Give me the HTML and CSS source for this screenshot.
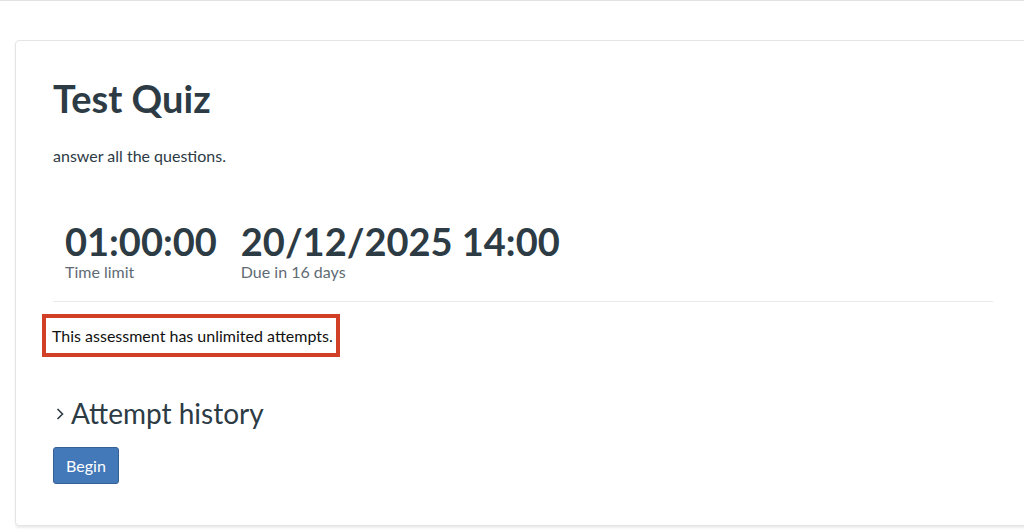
FILE: index.html
```html
<!DOCTYPE html>
<html>
<head>
<meta charset="utf-8">
<link rel="stylesheet" href="styles.css">
</head>
<body>
<div class="topbar"></div>
<main class="page">
  <section class="card">
    <h1 class="title">Test Quiz</h1>
    <p class="desc">answer all the questions.</p>
    <div class="stats">
      <div class="stat">
        <div class="stat-value">01:00:00</div>
        <div class="stat-label">Time limit</div>
      </div>
      <div class="stat">
        <div class="stat-value">20/12/2025 14:00</div>
        <div class="stat-label">Due in 16 days</div>
      </div>
    </div>
    <hr class="divider">
    <div class="attempts"><span>This assessment has unlimited attempts.</span></div>
    <div class="history">
      <svg class="chev" width="10" height="14" viewBox="0 0 10 14"><path d="M2.5 2 L7.5 7 L2.5 12" fill="none" stroke="#2d3b45" stroke-width="1.6"/></svg>
      <span>Attempt history</span>
    </div>
    <button class="begin">Begin</button>
  </section>
</main>
</body>
</html>
```
FILE: styles.css
```css
html, body {
  margin: 0;
  padding: 0;
  background: #fff;
  overflow: hidden;
  width: 1024px;
  height: 530px;
  font-family: Lato, "Noto Sans", sans-serif;
  color: #2d3b45;
}
.topbar {
  height: 1px;
  background: #e2e2e2;
}
.page {
  padding: 39px 0 0 15px;
}
.card {
  width: 940px;
  padding: 34px 38px 41px 37px;
  border: 1px solid #e4e4e4;
  border-radius: 4px;
  box-shadow: 0 2px 2px rgba(0,0,0,0.08);
  margin-right: -100px;
}
.title {
  margin: 0;
  font-size: 38px;
  font-weight: 700;
  line-height: 46px;
  color: #2d3b45;
}
.desc {
  margin: 24px 0 0;
  font-size: 16px;
  line-height: 22px;
}
.stats {
  display: flex;
  gap: 24px;
  padding-left: 12px;
  margin-top: 52px;
}
.stat-value {
  font-size: 38px;
  font-weight: 700;
  line-height: 44px;
}
.stat-label {
  font-size: 16px;
  color: #5f6b74;
  line-height: 20px;
  margin-top: -1px;
}
.divider {
  border: 0;
  border-top: 1px solid #e8eaec;
  margin: 19px 0 0;
}
.attempts {
  margin: 12px 0 0 -11px;
  display: flex;
}
.attempts span {
  border: 4px solid #d23f27;
  padding: 8px 3px 7px 6px;
  font-size: 16px;
  line-height: 20px;
  color: #111;
}
.history {
  display: flex;
  align-items: center;
  gap: 6px;
  margin-top: 39px;
  font-size: 28px;
  line-height: 34px;
  padding-left: 2px;
}
.chev {
  margin-top: 2px;
}
.begin {
  display: block;
  margin-top: 17px;
  background: #4378b9;
  color: #fff;
  border: 1px solid #356096;
  border-radius: 3px;
  font-family: Lato, "Noto Sans", sans-serif;
  font-size: 16px;
  padding: 0 12px;
  height: 37px;
  width: 66px;
}
```
